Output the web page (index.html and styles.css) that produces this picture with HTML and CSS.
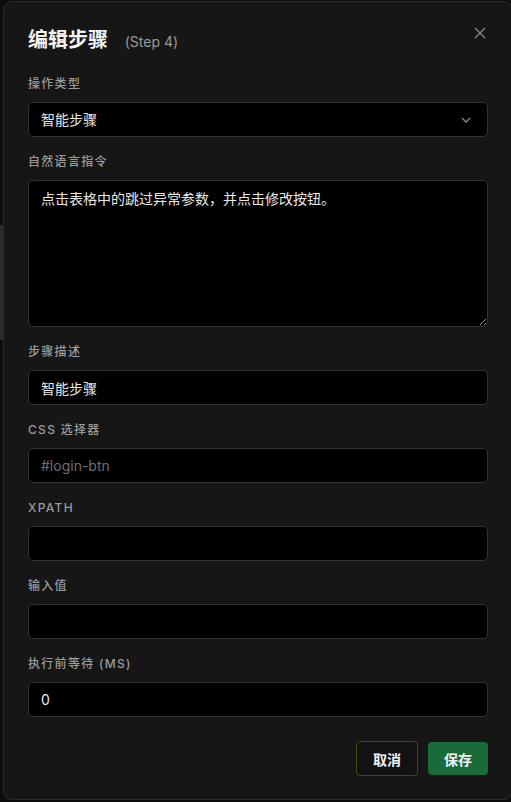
FILE: index.html
```html
<!DOCTYPE html>
<html lang="zh-CN">
<head>
    <meta charset="UTF-8">
    <title>编辑步骤</title>
    <link rel="stylesheet" href="styles.css">
</head>
<body>
<div class="backdrop">
    <div class="behind-bar"></div>
</div>
<section class="modal">
    <header class="modal-head">
        <h1>编辑步骤 <span class="step">(Step 4)</span></h1>
        <button class="close" aria-label="关闭">
            <svg width="12" height="12" viewBox="0 0 12 12"><path d="M1 1L11 11M11 1L1 11" stroke="currentColor" stroke-width="1.3" fill="none"/></svg>
        </button>
    </header>
    <form class="fields" onsubmit="return false">
        <label class="field">
            <span class="label">操作类型</span>
            <span class="select-wrap">
                <select>
                    <option>智能步骤</option>
                </select>
                <svg class="chevron" width="10" height="6" viewBox="0 0 10 6"><path d="M1 1L5 5L9 1" stroke="currentColor" stroke-width="1.3" fill="none"/></svg>
            </span>
        </label>
        <label class="field">
            <span class="label">自然语言指令</span>
            <textarea>点击表格中的跳过异常参数，并点击修改按钮。</textarea>
        </label>
        <label class="field">
            <span class="label">步骤描述</span>
            <input type="text" value="智能步骤">
        </label>
        <label class="field">
            <span class="label">CSS 选择器</span>
            <input type="text" placeholder="#login-btn">
        </label>
        <label class="field">
            <span class="label">XPath</span>
            <input type="text">
        </label>
        <label class="field">
            <span class="label">输入值</span>
            <input type="text">
        </label>
        <label class="field">
            <span class="label">执行前等待 (ms)</span>
            <input type="text" value="0">
        </label>
        <div class="actions">
            <button class="btn cancel">取消</button>
            <button class="btn save">保存</button>
        </div>
    </form>
</section>
</body>
</html>
```
FILE: styles.css
```css
html {
    background-color: #0c0c0c;
    font-family: "Inter", "Noto Sans CJK SC", sans-serif;
    color: #e6e6e6;
}

body {
    margin: 0;
    height: 802px;
    overflow: hidden;
}

.backdrop {
    position: absolute;
    left: 0;
    top: 0;
    width: 3px;
    height: 802px;
}

.behind-bar {
    margin-top: 225px;
    height: 115px;
    background-color: #2a2a2a;
}

.modal {
    position: absolute;
    left: 3px;
    top: 1px;
    width: 510px;
    height: 799px;
    box-sizing: border-box;
    padding: 24px 24px 0 24px;
    background-color: #161616;
    border: 1px solid #2c2c2c;
    border-radius: 9px;
}

.modal-head {
    display: flex;
    justify-content: space-between;
    align-items: flex-start;
    height: 50px;
}

.modal-head h1 {
    margin: 0;
    font-size: 20px;
    font-weight: 700;
    line-height: 28px;
    color: #f4f4f4;
}

.modal-head .step {
    margin-left: 12px;
    font-size: 14px;
    font-weight: 400;
    color: #9a9a9a;
}

.close {
    margin: 1px 1px 0 0;
    padding: 0;
    border: none;
    background: none;
    color: #8a8a8a;
    width: 14px;
    height: 14px;
}

.fields {
    display: flex;
    flex-direction: column;
}

.field {
    display: flex;
    flex-direction: column;
    margin-bottom: 17px;
}

.label {
    font-size: 12px;
    font-weight: 500;
    letter-spacing: 1.3px;
    line-height: 16px;
    text-transform: uppercase;
    color: #9b9b9b;
    margin-bottom: 10px;
}

input, select, textarea {
    box-sizing: border-box;
    width: 100%;
    margin: 0;
    padding: 0 12px;
    background-color: #000;
    border: 1px solid #333;
    border-radius: 5px;
    color: #e8e8e8;
    font-family: "Inter", "Noto Sans CJK SC", sans-serif;
    font-size: 14px;
    outline: none;
}

input, select {
    height: 35px;
}

input::placeholder {
    color: #6f6f6f;
}

textarea {
    height: 147px;
    padding: 8px 12px;
    line-height: 20px;
    resize: vertical;
}

.select-wrap {
    position: relative;
    display: block;
}

select {
    appearance: none;
}

.chevron {
    position: absolute;
    right: 17px;
    top: 15px;
    color: #8a8a8a;
}

.actions {
    display: flex;
    justify-content: flex-end;
    gap: 10px;
    margin-top: 7px;
}

.btn {
    height: 35px;
    padding: 0 16px;
    border-radius: 4px;
    font-family: "Inter", "Noto Sans CJK SC", sans-serif;
    font-size: 14px;
    font-weight: 700;
    color: #f2f2f2;
}

.cancel {
    background-color: #121212;
    border: 1px solid #4a4510;
}

.save {
    height: 33px;
    margin-top: 1px;
    background-color: #1b6a3a;
    border: none;
}
```
